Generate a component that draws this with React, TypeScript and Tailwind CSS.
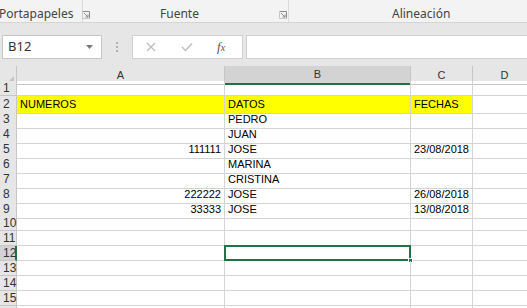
import React from "react"

const rows: { a?: string; b?: string; c?: string; yellow?: boolean }[] = [
  {},
  { a: "NUMEROS", b: "DATOS", c: "FECHAS", yellow: true },
  { b: "PEDRO" },
  { b: "JUAN" },
  { a: "111111", b: "JOSE", c: "23/08/2018" },
  { b: "MARINA" },
  { b: "CRISTINA" },
  { a: "222222", b: "JOSE", c: "26/08/2018" },
  { a: "33333", b: "JOSE", c: "13/08/2018" },
  {},
  {},
  {},
  {},
  {},
  {},
  {},
]

const cols = "grid grid-cols-[17px_208px_186px_62px_64px]"

function Launcher() {
  return (
    <svg width="8" height="8" viewBox="0 0 8 8" className="text-[#8a8a8a]">
      <path d="M0.5 0.5h7v7" fill="none" stroke="currentColor" />
      <path d="M0.5 0.5v7h7" fill="none" stroke="#c8c8c8" />
      <path d="M2 2l4 4M6 3.5V6H3.5" fill="none" stroke="currentColor" />
    </svg>
  )
}

export default function App() {
  return (
    <div className="w-[527px] h-[308px] overflow-hidden bg-white" style={{ fontFamily: '"Noto Sans", sans-serif' }}>

      {/* Ribbon group labels */}
      <div className="h-[23px] bg-[#f3f3f3] border-b border-[#d5d5d5] flex items-stretch text-[12px] text-[#444]">
        <div className="w-[84px] flex items-center pt-[5px] -ml-[1px] border-r border-[#dadada]">
          <span>Portapapeles</span>
          <span className="ml-[9px] mt-[3px]"><Launcher /></span>
        </div>
        <div className="w-[206px] flex items-center pt-[5px] border-r border-[#dadada] relative">
          <span className="ml-[77px]">Fuente</span>
          <span className="absolute left-[196px] top-[11px]"><Launcher /></span>
        </div>
        <div className="flex-1 flex items-center pt-[5px]">
          <span className="ml-[103px]">Alineación</span>
        </div>
      </div>

      {/* Formula bar */}
      <div className="h-[43px] bg-[#e6e6e6] flex items-start pt-[12px]">
        <div className="ml-[2px] w-[100px] h-[24px] bg-white border border-[#c6c6c6] flex items-center justify-between pl-[5px] pr-[8px]">
          <span className="text-[13px] text-[#333]">B12</span>
          <svg width="7" height="4" viewBox="0 0 7 4"><path d="M0 0h7L3.5 4z" fill="#7a7a7a" /></svg>
        </div>
        <div className="w-[30px] h-[24px] flex flex-col items-center justify-center gap-[2px]">
          <span className="w-[2px] h-[2px] bg-[#b0b0b0]" />
          <span className="w-[2px] h-[2px] bg-[#b0b0b0]" />
          <span className="w-[2px] h-[2px] bg-[#b0b0b0]" />
        </div>
        <div className="w-[111px] h-[24px] bg-white border border-[#d0d0d0] flex items-center">
          <svg width="10" height="10" viewBox="0 0 10 10" className="ml-[13px]">
            <path d="M1 1l8 8M9 1l-8 8" stroke="#bdbdbd" strokeWidth="1.3" />
          </svg>
          <svg width="12" height="10" viewBox="0 0 12 10" className="ml-[25px]">
            <path d="M1 5l3.5 3.5L11 1.5" stroke="#bdbdbd" strokeWidth="1.4" fill="none" />
          </svg>
          <span className="ml-[24px] text-[13px] italic text-[#555]" style={{ fontFamily: '"Liberation Serif", serif' }}>
            f<span className="text-[10px]">x</span>
          </span>
        </div>
        <div className="ml-[3px] flex-1 h-[24px] bg-white border border-[#d0d0d0] border-r-0" />
      </div>

      {/* Column headers */}
      <div className={`${cols} h-[15px] bg-[#e6e6e6] text-[11px] text-[#333]`} style={{ fontFamily: '"Liberation Sans", Arial, sans-serif' }}>
        <div className="border-r border-b border-[#c6c6c6] flex items-end justify-end pr-[2px] pb-[2px]">
          <svg width="6" height="6" viewBox="0 0 6 6"><path d="M6 0v6H0z" fill="#c4c4c4" /></svg>
        </div>
        <div className="border-r border-b border-[#c6c6c6] flex items-center justify-center">A</div>
        <div className="border-r border-b-2 border-b-[#217346] border-r-[#c6c6c6] bg-[#d3d3d3] flex items-center justify-center">B</div>
        <div className="border-r border-b border-[#c6c6c6] flex items-center justify-center">C</div>
        <div className="border-r border-b border-[#c6c6c6] flex items-center justify-center">D</div>
      </div>

      {/* Rows */}
      <div style={{ fontFamily: '"Liberation Sans", Arial, sans-serif' }} className="text-[11px] text-black">
        {rows.map((r, i) => {
          const n = i + 1
          const sel = n === 12
          return (
            <div key={n} className={`${cols} h-[15px]`}>
              <div
                className={
                  sel
                    ? "bg-[#d3d3d3] border-b border-[#c6c6c6] border-r-2 border-r-[#217346] text-[12px] text-[#333] flex items-center pl-[3px] leading-none"
                    : "bg-[#e6e6e6] border-b border-r border-[#c6c6c6] text-[12px] text-[#333] flex items-center pl-[3px] leading-none"
                }
              >
                {n}
              </div>
              <div className={`border-r border-b border-[#d4d4d4] ${r.yellow ? "bg-[#ffff00]" : ""} flex items-center ${r.yellow ? "justify-start pl-[3px]" : "justify-end pr-[3px]"}`}>
                {r.a}
              </div>
              <div className={`relative border-r border-b border-[#d4d4d4] ${r.yellow ? "bg-[#ffff00]" : ""} flex items-center pl-[3px]`}>
                {r.b}
                {sel && (
                  <>
                    <div className="absolute -left-[1px] -top-[1px] -right-[1px] -bottom-[1px] border-2 border-[#217346]" />
                    <div className="absolute -right-[3px] -bottom-[3px] w-[5px] h-[5px] bg-[#217346] border border-white" />
                  </>
                )}
              </div>
              <div className={`border-r border-b border-[#d4d4d4] ${r.yellow ? "bg-[#ffff00] justify-start pl-[3px]" : "justify-end pr-[3px]"} flex items-center`}>
                {r.c}
              </div>
              <div className="border-r border-b border-[#d4d4d4]" />
            </div>
          )
        })}
      </div>
    </div>
  )
}
